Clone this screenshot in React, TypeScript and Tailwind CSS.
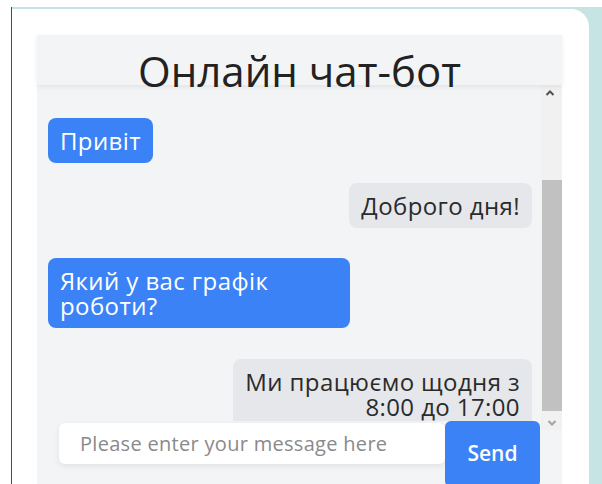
import React from "react";

type Msg = { from: "user" | "bot"; text: React.ReactNode; mt: string };

const messages: Msg[] = [
  { from: "user", text: "Привіт", mt: "mt-[33px]" },
  { from: "bot", text: "Доброго дня!", mt: "mt-[20px]" },
  { from: "user", text: "Який у вас графік роботи?", mt: "mt-[30px]" },
  {
    from: "bot",
    text: (
      <>
        Ми працюємо щодня з
        <br />
        8:00 до 17:00
      </>
    ),
    mt: "mt-[31px]",
  },
];

function Bubble({ m }: { m: Msg }) {
  if (m.from === "user") {
    return (
      <div className={`${m.mt} flex justify-start`}>
        <div className="max-w-[302px] rounded-[8px] bg-[#3b82f6] px-[12px] py-[10px] text-[24px] leading-[25px] tracking-[0.4px] text-white">
          {m.text}
        </div>
      </div>
    );
  }
  return (
    <div className={`${m.mt} flex justify-end`}>
      <div className="max-w-[304px] rounded-[8px] bg-[#e6e7ea] px-[12px] py-[10px] text-right text-[24px] leading-[25px] tracking-[0.4px] text-[#2b2b2b]">
        {m.text}
      </div>
    </div>
  );
}

function ScrollBar() {
  return (
    <div className="flex h-[345px] w-[21px] shrink-0 flex-col items-center bg-[#f1f1f1]">
      <svg width="10" height="8" viewBox="0 0 10 8" className="mt-[4px] ml-[-3px]">
        <path d="M1.5 6 L5 2.5 L8.5 6" stroke="#505050" strokeWidth="2" fill="none" />
      </svg>
      <div className="mt-[83px] h-[231px] w-[20px] bg-[#c1c1c1]" />
      <svg width="10" height="8" viewBox="0 0 10 8" className="mt-[8px]">
        <path d="M1.5 2 L5 5.5 L8.5 2" stroke="#a3a3a3" strokeWidth="2" fill="none" />
      </svg>
    </div>
  );
}

export default function App() {
  return (
    <div
      className="flex h-[484px] w-[602px] overflow-hidden bg-white"
      style={{ fontFamily: '"Open Sans", "Noto Sans", sans-serif' }}
    >
      <div className="w-[11px] shrink-0 bg-white" />
      <div className="mt-[7px] flex flex-1 flex-col border-l border-[#4a4a4a] bg-[#c6e4e4]">
        <div className="mt-[2px] mr-[13px] flex min-h-0 flex-1 flex-col rounded-tr-[18px] bg-white pt-[26px] pl-[25px] pr-[27px]">
          <div className="flex min-h-0 flex-1 flex-col bg-[#f3f4f6]">
            <div className="relative z-10 flex h-[50px] shrink-0 items-center justify-center bg-[#f3f4f6] pt-[22px] shadow-[0_2px_5px_rgba(0,0,0,0.07)]">
              <h1 className="text-[42px] leading-none text-[#222]">Онлайн чат-бот</h1>
            </div>
            <div className="flex min-h-0 flex-1">
              <div className="flex min-w-0 flex-1 flex-col">
                <div className="h-[336px] shrink-0 overflow-hidden pl-[11px] pr-[9px]">
                  {messages.map((m, i) => (
                    <Bubble key={i} m={m} />
                  ))}
                </div>
                <div className="flex items-start pl-[22px] pr-[1px]">
                  <div className="mt-[2px] flex h-[41px] flex-1 items-center rounded-[6px] bg-white pl-[21px] text-[20px] tracking-[0.3px] text-[#8a8a8a] shadow-[0_2px_6px_rgba(0,0,0,0.08)]">
                    Please enter your message here
                  </div>
                  <button className="h-[66px] w-[95px] shrink-0 rounded-[6px] bg-[#3b82f6] text-[21px] font-semibold text-white">
                    Send
                  </button>
                </div>
              </div>
              <ScrollBar />
            </div>
          </div>
        </div>
      </div>
    </div>
  );
}
